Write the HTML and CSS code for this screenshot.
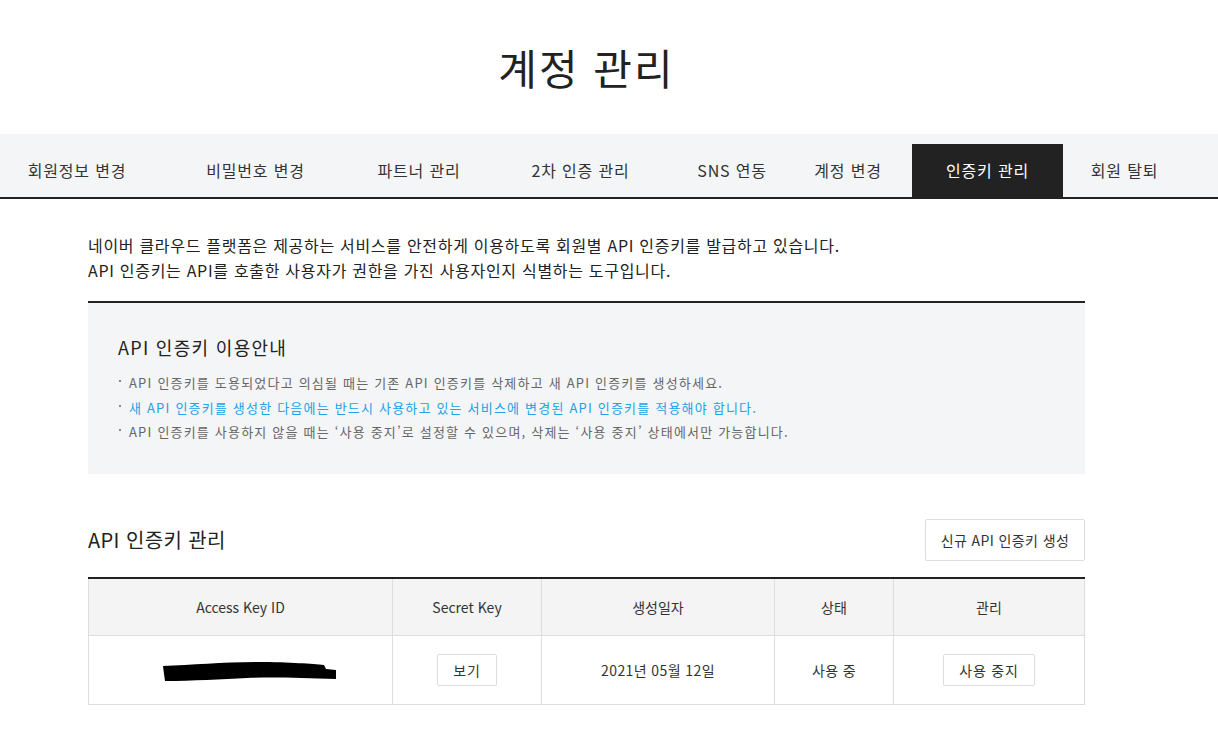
FILE: index.html
```html
<!DOCTYPE html>
<html lang="ko">
<head>
    <meta charset="UTF-8">
    <meta name="viewport" content="width=device-width, initial-scale=1.0">
    <title>계정 관리</title>
    <link rel="stylesheet" href="styles.css">
</head>
<body>
    <div class="wrap">
        <h1 class="page-title">계정 관리</h1>
    </div>

    <nav class="tabs">
        <a class="tab tab-info">회원정보 변경</a>
        <a class="tab tab-pw">비밀번호 변경</a>
        <a class="tab tab-partner">파트너 관리</a>
        <a class="tab tab-2fa">2차 인증 관리</a>
        <a class="tab tab-sns">SNS 연동</a>
        <a class="tab tab-account">계정 변경</a>
        <a class="tab tab-key active">인증키 관리</a>
        <a class="tab tab-leave">회원 탈퇴</a>
    </nav>

    <div class="wrap">
        <div class="container">
            <p class="intro">
                네이버 클라우드 플랫폼은 제공하는 서비스를 안전하게 이용하도록 회원별 API 인증키를 발급하고 있습니다.<br>
                API 인증키는 API를 호출한 사용자가 권한을 가진 사용자인지 식별하는 도구입니다.
            </p>

            <div class="notice">
                <h3 class="notice-title">API 인증키 이용안내</h3>
                <ul class="notice-list">
                    <li>API 인증키를 도용되었다고 의심될 때는 기존 API 인증키를 삭제하고 새 API 인증키를 생성하세요.</li>
                    <li class="point">새 API 인증키를 생성한 다음에는 반드시 사용하고 있는 서비스에 변경된 API 인증키를 적용해야 합니다.</li>
                    <li>API 인증키를 사용하지 않을 때는 ‘사용 중지’로 설정할 수 있으며, 삭제는 ‘사용 중지’ 상태에서만 가능합니다.</li>
                </ul>
            </div>

            <div class="section-head">
                <h2 class="section-title">API 인증키 관리</h2>
                <button class="btn btn-create">신규 API 인증키 생성</button>
            </div>

            <table class="key-table">
                <thead>
                    <tr>
                        <th class="col-id">Access Key ID</th>
                        <th class="col-secret">Secret Key</th>
                        <th class="col-date">생성일자</th>
                        <th class="col-state">상태</th>
                        <th>관리</th>
                    </tr>
                </thead>
                <tbody>
                    <tr>
                        <td>
                            <!-- 가려진 키 -->
                            <svg class="redact" width="176" height="20" viewBox="0 0 176 20">
                                <path d="M1 4 C30 3 60 0 95 0 C130 0 150 2 162 3 L164 7 L174 8 L174 17 C140 16 110 15 85 16 C60 17 30 19 3 19 L2 12 Z" fill="#000"/>
                            </svg>
                        </td>
                        <td><button class="btn btn-small">보기</button></td>
                        <td>2021년 05월 12일</td>
                        <td>사용 중</td>
                        <td><button class="btn btn-small">사용 중지</button></td>
                    </tr>
                </tbody>
            </table>
        </div>
    </div>
</body>
</html>
```

FILE: styles.css
```css
* {
    box-sizing: border-box;
}
body {
    margin: 0;
    font-family: 'Noto Sans CJK KR', 'Noto Sans', sans-serif;
    color: #222;
    background: #fff;
}
.wrap {
    width: 1173px;
}
.page-title {
    margin: 0;
    padding-top: 36px;
    height: 134px;
    font-size: 42px;
    font-weight: 400;
    line-height: 62px;
    letter-spacing: 2px;
    text-align: center;
    color: #222;
}

/* 탭 */
.tabs {
    display: flex;
    align-items: flex-end;
    height: 65px;
    background: #f4f5f7;
    border-bottom: 2px solid #222;
}
.tab {
    flex: none;
    height: 53px;
    line-height: 53px;
    text-align: center;
    font-size: 16px;
    letter-spacing: 0.8px;
    color: #333;
    cursor: pointer;
}
.tab.active {
    background: #222;
    color: #fff;
}
.tab-info { width: 154px; }
.tab-pw { width: 203px; }
.tab-partner { width: 124px; }
.tab-2fa { width: 199px; }
.tab-sns { width: 104px; }
.tab-account { width: 128px; }
.tab-key { width: 151px; }
.tab-leave { width: 123px; }

.container {
    width: 997px;
    margin: 0 auto;
}
.intro {
    margin: 34px 0 18px;
    font-size: 16px;
    line-height: 25px;
    letter-spacing: 0.7px;
    color: #222;
}

/* 이용안내 */
.notice {
    border-top: 2px solid #222;
    background: #f4f5f7;
    padding: 32px 30px 29px;
}
.notice-title {
    margin: 0 0 12px;
    font-size: 18px;
    font-weight: 400;
    line-height: 24px;
    letter-spacing: 1.3px;
    color: #222;
}
.notice-list {
    list-style: none;
    margin: 0;
    padding: 0;
}
.notice-list li {
    position: relative;
    padding-left: 11px;
    font-size: 13px;
    line-height: 24.5px;
    letter-spacing: 1.2px;
    color: #666;
}
.notice-list li::before {
    content: '';
    position: absolute;
    left: 1px;
    top: 9px;
    width: 2px;
    height: 2px;
    background: #888;
}
.notice-list li.point {
    color: #21a2e8;
}

/* 인증키 관리 */
.section-head {
    display: flex;
    align-items: center;
    justify-content: space-between;
    margin-top: 45px;
    margin-bottom: 16px;
}
.section-title {
    margin: 0;
    font-size: 20px;
    font-weight: 400;
    letter-spacing: 0.4px;
    color: #222;
}
.btn {
    font-family: inherit;
    background: #fff;
    border: 1px solid #ddd;
    border-radius: 2px;
    color: #333;
    cursor: pointer;
}
.btn-create {
    width: 160px;
    height: 42px;
    font-size: 14px;
    letter-spacing: 0.4px;
}
.btn-small {
    height: 32px;
    padding: 0 15px;
    font-size: 14px;
    letter-spacing: 0.8px;
    min-width: 60px;
}

.key-table {
    width: 100%;
    border-collapse: collapse;
    border-top: 2px solid #222;
    font-size: 14px;
}
.key-table th,
.key-table td {
    border: 1px solid #ddd;
    text-align: center;
    font-weight: 400;
    color: #333;
}
.key-table th {
    height: 58px;
    background: #f4f4f4;
    border-top: none;
}
.key-table td {
    height: 69px;
    letter-spacing: 0.4px;
}
.col-id { width: 304px; }
.col-secret { width: 149px; }
.col-date { width: 233px; }
.col-state { width: 119px; }
.redact {
    display: block;
    margin: 4px 0 0 72px;
}
```
